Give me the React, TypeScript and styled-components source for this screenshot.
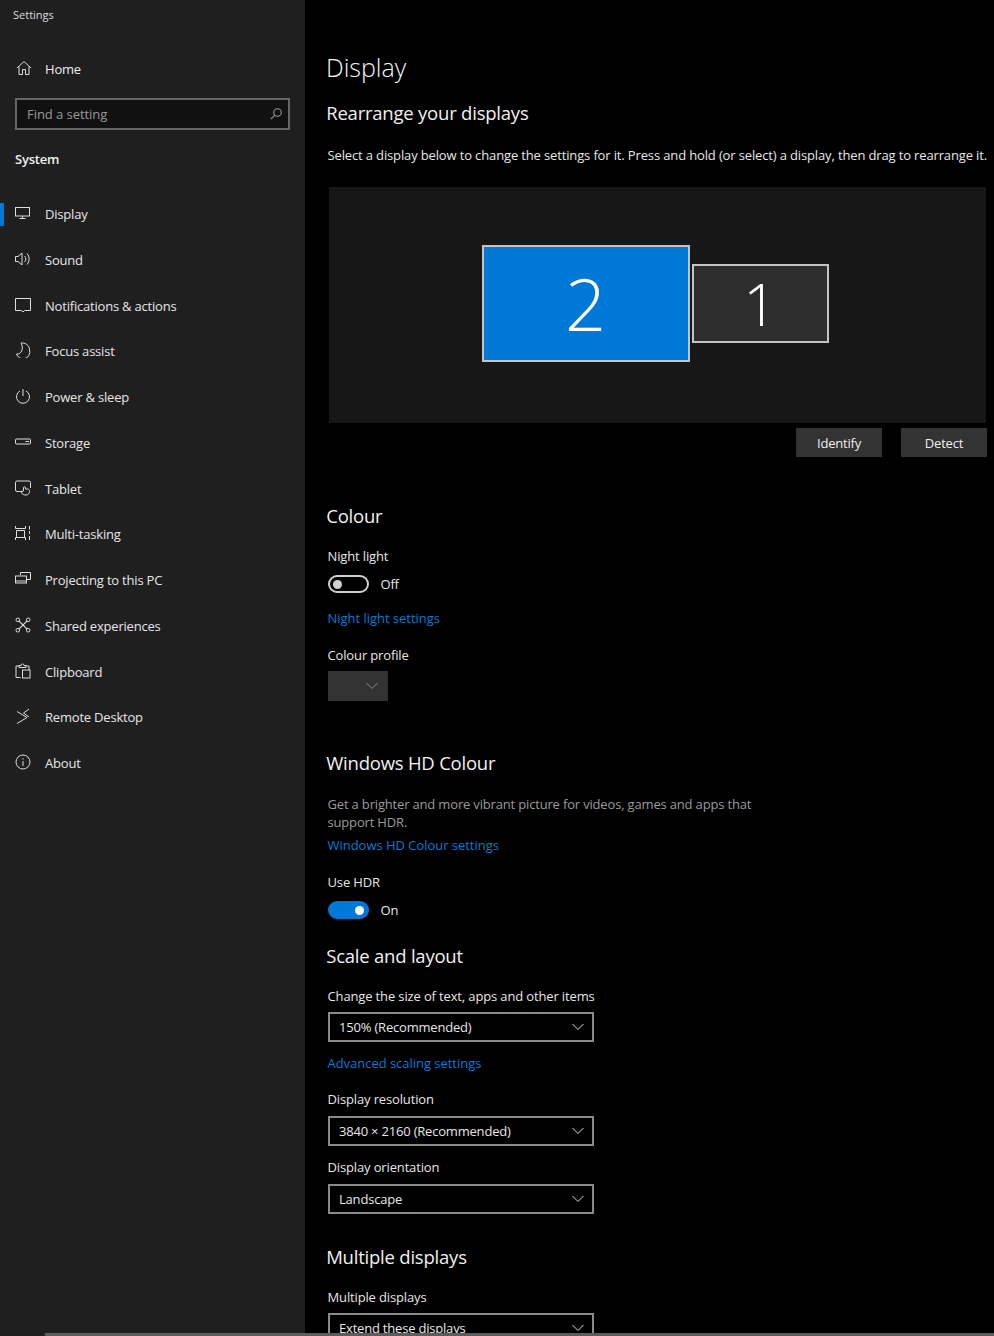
import React from "react";
import styled, { createGlobalStyle } from "styled-components";

const Global = createGlobalStyle`
  html, body { margin: 0; padding: 0; background: #000; }
  body { width: 994px; height: 1336px; overflow: hidden; font-family: "Open Sans", "Noto Sans", sans-serif; letter-spacing: -0.2px; }
  * { box-sizing: border-box; }
`;

const Page = styled.div`
  position: relative;
  display: flex;
  width: 994px;
  height: 1336px;
  overflow: hidden;
  background: #000;
  color: #fff;
`;

const Sidebar = styled.aside`
  width: 305px;
  flex: none;
  background: #1f1f1f;
  display: flex;
  flex-direction: column;
`;

const AppTitle = styled.div`
  font-size: 11px;
  line-height: 16px;
  padding: 7px 0 0 13px;
  color: #dcdcdc;
  letter-spacing: 0;
`;

const HomeRow = styled.div`
  display: flex;
  align-items: center;
  height: 24px;
  margin-top: 34px;
  padding-left: 16px;
  font-size: 13px;
  color: #eee;
  gap: 13px;
`;

const SearchBox = styled.div`
  display: flex;
  align-items: center;
  justify-content: space-between;
  width: 275px;
  height: 32px;
  margin: 17px 0 0 15px;
  padding: 0 6px 0 10px;
  border: 2px solid #666;
  background: #111;
  font-size: 13px;
  color: #999;
  letter-spacing: -0.050px;
`;

const SectionName = styled.div`
  font-size: 13px;
  font-weight: 600;
  line-height: 18px;
  margin: 20px 0 0 15px;
  color: #f0f0f0;
`;

const NavList = styled.nav`
  display: flex;
  flex-direction: column;
  margin-top: 23.300px;
`;

const NavRow = styled.div<{ $active?: boolean }>`
  display: flex;
  align-items: center;
  height: 45.750px;
  gap: 14px;
  padding-left: 15px;
  font-size: 13px;
  color: #e6e6e6;
  position: relative;
  &::before {
    content: "";
    display: ${(p) => (p.$active ? "block" : "none")};
    position: absolute;
    left: 0;
    top: 12px;
    width: 4px;
    height: 23px;
    background: #0078d7;
  }
`;

const NavGlyph = styled.svg`
  width: 16px;
  height: 16px;
  flex: none;
  fill: none;
  stroke: #dedede;
  stroke-width: 1;
  margin-top: -2px;
`;

const SearchGlyph = styled.svg`
  width: 12px;
  height: 12px;
  flex: none;
  fill: none;
  stroke: #9a9a9a;
  stroke-width: 1.100;
`;

const Main = styled.main`
  flex: 1;
  min-width: 0;
  padding-left: 22.500px;
  display: flex;
  flex-direction: column;
  & > * {
    flex: none;
  }
`;

const PageTitle = styled.h1`
  margin: 49px 0 0 -1.500px;
  font-size: 25px;
  font-weight: 300;
  line-height: 36px;
  color: #f4f4f4;
  letter-spacing: 0;
`;

const Heading = styled.h2<{ $top: number }>`
  margin: ${(p) => p.$top}px 0 0 -1.300px;
  font-size: 18.500px;
  font-weight: 400;
  line-height: 26px;
  color: #f0f0f0;
  letter-spacing: -0.220px;
`;

const Text = styled.div<{ $top: number; $muted?: boolean }>`
  margin-top: ${(p) => p.$top}px;
  font-size: 13px;
  line-height: 18px;
  color: ${(p) => (p.$muted ? "#9a9a9a" : "#e6e6e6")};
  white-space: nowrap;
  letter-spacing: ${(p) => (p.$muted ? "-0.170px" : "-0.140px")};
`;

const LinkText = styled(Text)`
  color: #0a78d4;
  letter-spacing: -0.030px;
`;

const Preview = styled.div`
  width: 657px;
  height: 236px;
  margin: 23px 0 0 1.500px;
  background: #171717;
  display: flex;
  align-items: center;
  justify-content: center;
  gap: 2px;
  padding: 0 5px 4px 0;
`;

const Monitor = styled.div<{ $primary?: boolean }>`
  width: ${(p) => (p.$primary ? 208 : 137)}px;
  height: ${(p) => (p.$primary ? 117 : 79)}px;
  border: 2px solid #c4c4c4;
  background: ${(p) => (p.$primary ? "#0078d7" : "#2e2e2e")};
  display: flex;
  align-items: center;
  justify-content: center;
  font-size: ${(p) => (p.$primary ? 72 : 59)}px;
  font-weight: 300;
  letter-spacing: 0;
  color: #fff;
`;

const ButtonRow = styled.div`
  display: flex;
  justify-content: flex-end;
  gap: 19px;
  width: 659.500px;
  margin-top: 5px;
`;

const FlatButton = styled.div`
  width: 86px;
  height: 29px;
  background: #333;
  display: flex;
  align-items: center;
  justify-content: center;
  font-size: 13px;
  color: #eee;
`;

const ToggleRow = styled.div`
  display: flex;
  align-items: center;
  gap: 11.500px;
  height: 18px;
  margin-top: 10px;
  font-size: 13px;
  color: #e6e6e6;
`;

const Switch = styled.div<{ $on?: boolean }>`
  position: relative;
  width: 41.500px;
  height: 18px;
  border-radius: 9px;
  border: 2px solid ${(p) => (p.$on ? "#0078d7" : "#d0d0d0")};
  background: ${(p) => (p.$on ? "#0078d7" : "transparent")};
  &::after {
    content: "";
    position: absolute;
    top: 2.500px;
    ${(p) => (p.$on ? "right: 3px;" : "left: 3px;")}
    width: 9px;
    height: 9px;
    border-radius: 50%;
    background: ${(p) => (p.$on ? "#fff" : "#d0d0d0")};
  }
`;

const Dropdown = styled.div<{ $top: number }>`
  display: flex;
  align-items: center;
  justify-content: space-between;
  width: 266.500px;
  height: 30px;
  margin-top: ${(p) => p.$top}px;
  padding: 0 8px 0 9.500px;
  border: 2px solid #8a8a8a;
  font-size: 13px;
  color: #e6e6e6;
`;

const DisabledDropdown = styled.div`
  display: flex;
  align-items: center;
  justify-content: flex-end;
  width: 60.500px;
  height: 30px;
  margin-top: 7px;
  padding-right: 10px;
  background: #333;
`;

const Chevron = styled.svg<{ $dim?: boolean }>`
  width: 12px;
  height: 8px;
  fill: none;
  stroke: ${(p) => (p.$dim ? "#8a8a8a" : "#dedede")};
  stroke-width: 1;
`;

const HScroll = styled.div`
  position: absolute;
  left: 45px;
  right: 0;
  bottom: 0;
  height: 3px;
  background: #5c5c5c;
`;

const Down = ({ dim }: { dim?: boolean }) => (
  <Chevron $dim={dim} viewBox="0 0 12 8">
    <path d="M.5 1l5.500 5.500L11.500 1" />
  </Chevron>
);

const icons: Record<string, React.ReactNode> = {
  display: (<><rect x=".5" y="2.500" width="14" height="8.500" /><path d="M7.500 11v2.500M4.500 13.500h6" /></>),
  sound: (<><path d="M.5 5.500v5h2.500l4 3.500V2L3 5.500z" /><path d="M9.500 5a4 4 0 0 1 0 6M12 2.500a8 8 0 0 1 0 11" /></>),
  notifications: (<path d="M.5 1.500h15v12H9.500L8 15 6.500 13.500h-6z" />),
  focus: (<path d="M6 1c4-.5 8.500 2 8.500 7a6.500 6.500 0 0 1-13 4c5 .8 7.500-6 4.500-11z" />),
  power: (<><path d="M8 1v7" /><path d="M5 3a6.500 6.500 0 1 0 6 0" /></>),
  storage: (<><rect x=".5" y="5" width="15" height="5" rx="1" /><path d="M10.500 7.500h3.500" /></>),
  tablet: (<><path d="M7 11.500H2a1.500 1.500 0 0 1-1.500-1.500V2.500a1.500 1.500 0 0 1 1.500-1.500h12a1.500 1.500 0 0 1 1.500 1.500V8" /><path d="M10 15c-2 0-3.500-1.500-3.500-3.500l2-.5V7.800a1 1 0 0 1 2 0V9h2c1.500 0 2 1 2 2.500s-1 3.500-3.500 3.500z" /></>),
  multi: (<><path d="M.5 1v2.500h10V1M.5 15v-2.500h10V15M1.500 5.500h8v7h-8z" /><path d="M14.500 1v3.500M14.500 6v3M14.500 11v4" /></>),
  project: (<><path d="M5.500 4V1.500h10v7H12" /><rect x=".5" y="5" width="11" height="7" /><path d="M.5 10h11" /></>),
  shared: (<><circle cx="2.800" cy="2.800" r="1.800" /><circle cx="13.200" cy="2.800" r="1.800" /><circle cx="2.800" cy="13.200" r="1.800" /><circle cx="13.200" cy="13.200" r="1.800" /><path d="M4.100 4.100L11.900 11.900M11.900 4.100L4.100 11.900" strokeWidth="1.300" /></>),
  clipboard: (<><path d="M5.500 14.500H1V3h3M11 3h3v4" /><path d="M4 4.500V2.500h2a1.500 1.500 0 0 1 3 0h2v2z" /><rect x="7.500" y="7" width="7.500" height="8" /></>),
  remote: (<path d="M2 3.500l10 6-10 6M14 1L8.500 5l5.500 4" />),
  about: (<><circle cx="8" cy="8" r="7" /><path d="M8 7v5M8 4.200v1.300" /></>),
};

const navItems: [string, string][] = [
  ["display", "Display"],
  ["sound", "Sound"],
  ["notifications", "Notifications & actions"],
  ["focus", "Focus assist"],
  ["power", "Power & sleep"],
  ["storage", "Storage"],
  ["tablet", "Tablet"],
  ["multi", "Multi-tasking"],
  ["project", "Projecting to this PC"],
  ["shared", "Shared experiences"],
  ["clipboard", "Clipboard"],
  ["remote", "Remote Desktop"],
  ["about", "About"],
];

export default function App() {
  return (
    <Page>
      <Global />
      <Sidebar>
        <AppTitle>Settings</AppTitle>
        <HomeRow>
          <NavGlyph viewBox="0 0 16 16">
            <path d="M1 8l7-6.500L15 8M3 6.500v8h3.500V9.500h3v5H13v-8" />
          </NavGlyph>
          Home
        </HomeRow>
        <SearchBox>
          Find a setting
          <SearchGlyph viewBox="0 0 12 12">
            <circle cx="7.500" cy="4.500" r="3.800" />
            <path d="M4.800 7.200L.8 11.200" />
          </SearchGlyph>
        </SearchBox>
        <SectionName>System</SectionName>
        <NavList>
          {navItems.map(([key, label], i) => (
            <NavRow key={key} $active={i === 0}>
              <NavGlyph viewBox="0 0 16 16">{icons[key]}</NavGlyph>
              {label}
            </NavRow>
          ))}
        </NavList>
      </Sidebar>
      <Main>
        <PageTitle>Display</PageTitle>
        <Heading $top={15}>Rearrange your displays</Heading>
        <Text $top={20}>Select a display below to change the settings for it. Press and hold (or select) a display, then drag to rearrange it.</Text>
        <Preview>
          <Monitor $primary>2</Monitor>
          <Monitor>1</Monitor>
        </Preview>
        <ButtonRow>
          <FlatButton>Identify</FlatButton>
          <FlatButton>Detect</FlatButton>
        </ButtonRow>
        <Heading $top={46}>Colour</Heading>
        <Text $top={18}>Night light</Text>
        <ToggleRow>
          <Switch />
          Off
        </ToggleRow>
        <LinkText $top={16}>Night light settings</LinkText>
        <Text $top={19}>Colour profile</Text>
        <DisabledDropdown>
          <Down dim />
        </DisabledDropdown>
        <Heading $top={49}>Windows HD Colour</Heading>
        <Text $top={19} $muted>
          Get a brighter and more vibrant picture for videos, games and apps that
          <br />
          support HDR.
        </Text>
        <LinkText $top={5}>Windows HD Colour settings</LinkText>
        <Text $top={19}>Use HDR</Text>
        <ToggleRow>
          <Switch $on />
          On
        </ToggleRow>
        <Heading $top={24}>Scale and layout</Heading>
        <Text $top={18}>Change the size of text, apps and other items</Text>
        <Dropdown $top={7}>
          150% (Recommended)
          <Down />
        </Dropdown>
        <LinkText $top={12}>Advanced scaling settings</LinkText>
        <Text $top={18}>Display resolution</Text>
        <Dropdown $top={8}>
          3840 × 2160 (Recommended)
          <Down />
        </Dropdown>
        <Text $top={12}>Display orientation</Text>
        <Dropdown $top={8}>
          Landscape
          <Down />
        </Dropdown>
        <Heading $top={30}>Multiple displays</Heading>
        <Text $top={18}>Multiple displays</Text>
        <Dropdown $top={7}>
          Extend these displays
          <Down />
        </Dropdown>
      </Main>
      <HScroll />
    </Page>
  );
}
